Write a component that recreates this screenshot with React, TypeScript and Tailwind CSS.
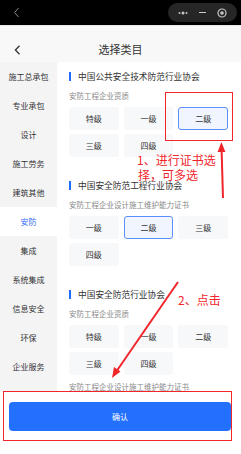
import React from "react";

const font = { fontFamily: '"Noto Sans CJK SC", "Noto Sans", sans-serif' };

const categories = [
  "施工总承包",
  "专业承包",
  "设计",
  "施工劳务",
  "建筑其他",
  "安防",
  "集成",
  "系统集成",
  "信息安全",
  "环保",
  "企业服务",
  "其他",
];

interface Group {
  org: string;
  title: string;
  levels: string[];
  selected?: string;
}

const groups: Group[] = [
  {
    org: "中国公共安全技术防范行业协会",
    title: "安防工程企业资质",
    levels: ["特级", "一级", "二级", "三级", "四级"],
    selected: "二级",
  },
  {
    org: "中国安全防范工程行业协会",
    title: "安防工程企业设计施工维护能力证书",
    levels: ["一级", "二级", "三级", "四级"],
    selected: "二级",
  },
  {
    org: "中国安全防范行业协会",
    title: "安防工程企业资质",
    levels: ["特级", "一级", "二级", "三级", "四级"],
  },
];

function LevelGrid({ levels, selected }: { levels: string[]; selected?: string }) {
  return (
    <div className="mt-[6px] grid grid-cols-3 gap-x-[5px] gap-y-[4px]">
      {levels.map((level) => (
        <div
          key={level}
          className={
            level === selected
              ? "flex h-[23px] items-center justify-center rounded-[3px] border border-[#5b8ff9] bg-[#f0f5ff] text-[8px] text-[#333]"
              : "flex h-[23px] items-center justify-center rounded-[3px] bg-[#f7f8fa] text-[8px] text-[#333]"
          }
        >
          {level}
        </div>
      ))}
    </div>
  );
}

function Annotations() {
  return (
    <div className="pointer-events-none absolute inset-0">
      <div className="absolute left-[165px] top-[92px] h-[49px] w-[68px] border-[1.5px] border-[#f0262b]" />
      <div className="absolute left-[3px] top-[391px] h-[50px] w-[229px] border-[1.5px] border-[#f0262b]" />
      <div className="absolute left-[137px] top-[152px] text-[12px] leading-[15px] text-[#f0262b]">
        <div>1、进行证书选</div>
        <div className="pl-[1px]">择，可多选</div>
      </div>
      <div className="absolute left-[178px] top-[292px] text-[12px] leading-[15px] text-[#f0262b]">
        2、点击
      </div>
      <svg className="absolute left-0 top-0" width="241" height="454" viewBox="0 0 241 454">
        <line x1="223" y1="198" x2="221.6" y2="150" stroke="#f0262b" strokeWidth="2" />
        <polygon points="221.4,142 217.6,152 225.4,152" fill="#f0262b" />
        <line x1="178" y1="282" x2="116" y2="372" stroke="#f0262b" strokeWidth="2" />
        <polygon points="112,378 114,367 120.5,371.5" fill="#f0262b" />
      </svg>
    </div>
  );
}

export default function App() {
  return (
    <div className="relative flex h-[454px] w-[241px] flex-col overflow-hidden bg-white" style={font}>
      <div className="flex h-[25px] shrink-0 items-center justify-between bg-black pl-[13px] pr-[4px]">
        <svg width="7" height="11" viewBox="0 0 7 11">
          <path d="M5.5 1 L1.5 5.5 L5.5 10" fill="none" stroke="#8a8a8a" strokeWidth="1" />
        </svg>
        <div className="flex h-[19px] w-[69px] items-center justify-between rounded-full bg-[#262626] px-[10px]">
          <svg width="10" height="4" viewBox="0 0 10 4">
            <circle cx="1.5" cy="2" r="1" fill="#c8c8c8" />
            <circle cx="5" cy="2" r="1.5" fill="#c8c8c8" />
            <circle cx="8.5" cy="2" r="1" fill="#c8c8c8" />
          </svg>
          <div className="h-[1.5px] w-[7px] bg-[#c8c8c8]" />
          <svg width="10" height="10" viewBox="0 0 10 10">
            <circle cx="5" cy="5" r="4" fill="none" stroke="#c8c8c8" strokeWidth="1.2" />
            <circle cx="5" cy="5" r="1.8" fill="#c8c8c8" />
          </svg>
        </div>
      </div>

      <div className="relative flex h-[37px] shrink-0 items-end justify-center border-t border-[#e8e8e8] bg-[#f8f8f9] pb-[6px]">
        <svg className="absolute left-[14px] top-[19px]" width="7" height="10" viewBox="0 0 7 10">
          <path d="M5.5 0.8 L1.4 5 L5.5 9.2" fill="none" stroke="#333" strokeWidth="1.3" />
        </svg>
        <span className="text-[11px] leading-[14px] text-[#333]">选择类目</span>
      </div>

      <div className="flex min-h-0 flex-1">
        <div className="w-[57px] shrink-0 bg-[#f4f4f5]">
          {categories.map((name) => (
            <div
              key={name}
              className={
                name === "安防"
                  ? "flex h-[29px] items-center justify-center bg-white text-[8px] text-[#2f6cf6]"
                  : "flex h-[29px] items-center justify-center text-[8px] text-[#333]"
              }
            >
              {name}
            </div>
          ))}
        </div>
        <div className="min-w-0 flex-1 pl-[12px] pr-[13px] pt-[9px]">
          {groups.map((group, index) => (
            <div key={group.org} className={index === 0 ? "" : "mt-[23px]"}>
              <div className="flex h-[11px] items-center">
                <div className="h-[9px] w-[2px] bg-[#1f6bff]" />
                <span className="ml-[7px] whitespace-nowrap text-[8.7px] leading-[11px] text-[#333]">
                  {group.org}
                </span>
              </div>
              <div className="mt-[9px] h-[10px] whitespace-nowrap text-[7.5px] leading-[10px] text-[#888]">
                {group.title}
              </div>
              <LevelGrid levels={group.levels} selected={group.selected} />
            </div>
          ))}
          <div className="mt-[7px] h-[10px] whitespace-nowrap text-[7.5px] leading-[10px] text-[#888]">
            安防工程企业设计施工维护能力证书
          </div>
        </div>
      </div>

      <div className="h-[62px] shrink-0 bg-white pl-[9px] pr-[10px] pt-[10px]">
        <button className="flex h-[29px] w-full items-center justify-center rounded-[4px] bg-[#2370ff] text-[8px] text-white">
          确认
        </button>
      </div>

      <Annotations />
    </div>
  );
}
